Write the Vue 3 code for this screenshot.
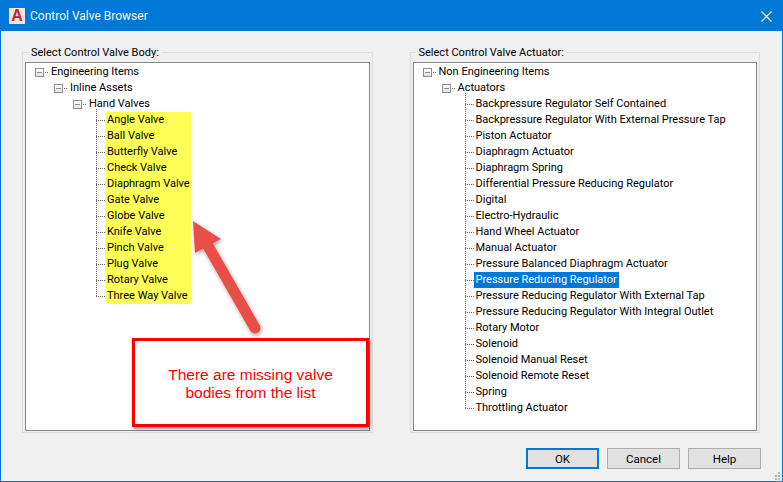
<script setup>
const bodies = ['Angle Valve','Ball Valve','Butterfly Valve','Check Valve','Diaphragm Valve','Gate Valve','Globe Valve','Knife Valve','Pinch Valve','Plug Valve','Rotary Valve','Three Way Valve']
const actuators = ['Backpressure Regulator Self Contained','Backpressure Regulator With External Pressure Tap','Piston Actuator','Diaphragm Actuator','Diaphragm Spring','Differential Pressure Reducing Regulator','Digital','Electro-Hydraulic','Hand Wheel Actuator','Manual Actuator','Pressure Balanced Diaphragm Actuator','Pressure Reducing Regulator','Pressure Reducing Regulator With External Tap','Pressure Reducing Regulator With Integral Outlet','Rotary Motor','Solenoid','Solenoid Manual Reset','Solenoid Remote Reset','Spring','Throttling Actuator']
const leftBranches = ['Engineering Items','Inline Assets','Hand Valves']
const rightBranches = ['Non Engineering Items','Actuators']
</script>

<template>
  <div class="window">
    <header class="titlebar">
      <span class="app-icon">A</span>
      <span class="title">Control Valve Browser</span>
      <svg class="close" width="11" height="11" viewBox="0 0 11 11"><path d="M.5 .5l10 10M10.5 .5l-10 10" stroke="#fff" stroke-width="1.1" fill="none"/></svg>
    </header>

    <main class="content">
      <section class="group">
        <div class="legend">Select Control Valve Body:</div>
        <div class="tree">
          <div v-for="(b, i) in leftBranches" :key="b" class="row branch" :style="{ paddingLeft: 9 + i * 19 + 'px' }">
            <span class="box"></span><span class="stub"></span><span class="label">{{ b }}</span>
          </div>
          <div class="leaves left-leaves">
            <div v-for="v in bodies" :key="v" class="row leaf">
              <span class="leaf-stub"></span><span class="label marked">{{ v }}</span>
            </div>
          </div>
        </div>
      </section>

      <section class="group">
        <div class="legend">Select Control Valve Actuator:</div>
        <div class="tree">
          <div v-for="(b, i) in rightBranches" :key="b" class="row branch" :style="{ paddingLeft: 9 + i * 19 + 'px' }">
            <span class="box"></span><span class="stub"></span><span class="label">{{ b }}</span>
          </div>
          <div class="leaves right-leaves">
            <div v-for="a in actuators" :key="a" class="row leaf">
              <span class="leaf-stub"></span><span class="label" :class="{ selected: a === 'Pressure Reducing Regulator' }">{{ a }}</span>
            </div>
          </div>
        </div>
      </section>
    </main>

    <footer class="buttons">
      <button class="btn default">OK</button>
      <button class="btn">Cancel</button>
      <button class="btn">Help</button>
    </footer>

    <svg class="arrow" width="90" height="125" viewBox="0 0 90 125">
      <defs>
        <filter id="sh" x="-30%" y="-30%" width="160%" height="160%"><feDropShadow dx="1" dy="2" stdDeviation="2" flood-color="#000" flood-opacity=".35"/></filter>
      </defs>
      <g filter="url(#sh)">
        <path d="M18 26L65 108" stroke="#e9504a" stroke-width="11" stroke-linecap="round" fill="none"/>
        <path d="M3 1L31 19L5 33Z" fill="#e9504a"/>
      </g>
    </svg>

    <div class="callout">There are missing valve<br>bodies from the list</div>

    <svg class="grip" width="8" height="8" viewBox="0 0 8 8" fill="#b5b5b5"><rect x="5" y="0" width="2" height="2"/><rect x="2" y="3" width="2" height="2"/><rect x="5" y="3" width="2" height="2"/><rect x="2" y="6" width="2" height="2"/><rect x="5" y="6" width="2" height="2"/></svg>
  </div>
</template>

<style>
html, body { margin: 0; background: #f0f0f0; }
</style>

<style scoped>
.window {
  position: relative;
  box-sizing: border-box;
  width: 783px;
  height: 482px;
  display: flex;
  flex-direction: column;
  background: #f0f0f0;
  border: 1px solid #0078d7;
  font: 11px/16px Roboto, "Liberation Sans", Arial, sans-serif;
  color: #000;
  overflow: hidden;
}
.titlebar {
  flex: none;
  height: 30px;
  display: flex;
  align-items: center;
  padding: 0 10px 0 8px;
  background: #0078d7;
  color: #fff;
}
.app-icon {
  width: 16px;
  height: 16px;
  background: #f2e4e2;
  color: #c0272d;
  font: 700 16px/16px "Liberation Sans", Arial, sans-serif;
  text-align: center;
}
.title { margin-left: 5px; flex: 1; font-size: 12px; color: #f4f9fd; }
.content {
  flex: none;
  height: 402px;
  display: flex;
  gap: 37px;
  padding: 21px 22px 0 21px;
  box-sizing: border-box;
}
.group {
  box-sizing: border-box;
  width: 351px;
  height: 381px;
  display: flex;
  flex-direction: column;
  border: 1px solid #dcdcdc;
  padding: 0 2px 1px;
}
.legend {
  flex: none;
  align-self: flex-start;
  height: 15px;
  margin: -8px 0 2px 3px;
  padding: 0 3px;
  background: #f0f0f0;
  line-height: 16px;
}
.tree {
  flex: 1;
  box-sizing: border-box;
  padding-top: 1px;
  background: #fff;
  border: 1px solid #828790;
}
.row {
  height: 16px;
  display: flex;
  align-items: center;
  white-space: nowrap;
}
.box {
  flex: none;
  box-sizing: border-box;
  width: 9px;
  height: 9px;
  border: 1px solid #8e8f91;
  background: linear-gradient(#8a8d92, #8a8d92) center / 5px 1px no-repeat, linear-gradient(#fff, #dfe3ea);
}
.stub {
  flex: none;
  width: 3px;
  margin: 0 1px 0 1px;
  border-top: 1px dotted #666;
}
.label { padding: 0 2px; line-height: 16px; }
.leaves { position: relative; }
.left-leaves { margin-left: 70px; }
.right-leaves { margin-left: 51px; }
.leaves::before {
  content: "";
  position: absolute;
  left: 0;
  top: -3px;
  bottom: 8px;
  border-left: 1px dotted #666;
}
.leaf-stub {
  flex: none;
  width: 9px;
  border-top: 1px dotted #666;
}
.marked { width: 82px; background: #ffff57; }
.selected { background: #0078d7; color: #fff; }
.buttons {
  flex: 1;
  display: flex;
  justify-content: flex-end;
  align-items: flex-start;
  gap: 8px;
  padding: 15px 21px 0 0;
}
.btn {
  box-sizing: border-box;
  width: 73px;
  height: 21px;
  padding: 0;
  background: #e1e1e1;
  border: 1px solid #adadad;
  font: 11.5px/16px Roboto, "Liberation Sans", Arial, sans-serif;
  color: #000;
}
.default { border: 2px solid #0078d7; }
.arrow {
  position: absolute;
  left: 189px;
  top: 219px;
  pointer-events: none;
}
.callout {
  position: absolute;
  left: 131px;
  top: 337px;
  box-sizing: border-box;
  width: 237px;
  height: 89px;
  display: flex;
  align-items: center;
  justify-content: center;
  padding-top: 3px;
  text-align: center;
  background: #fff;
  border: 3px solid #f00;
  box-shadow: 1px 2px 3px rgba(0, 0, 0, .45);
  color: #f00;
  font: 15.5px/18px "Liberation Sans", Arial, sans-serif;
}
.close { flex: none; }
.grip { position: absolute; right: 1px; bottom: 1px; }
</style>
